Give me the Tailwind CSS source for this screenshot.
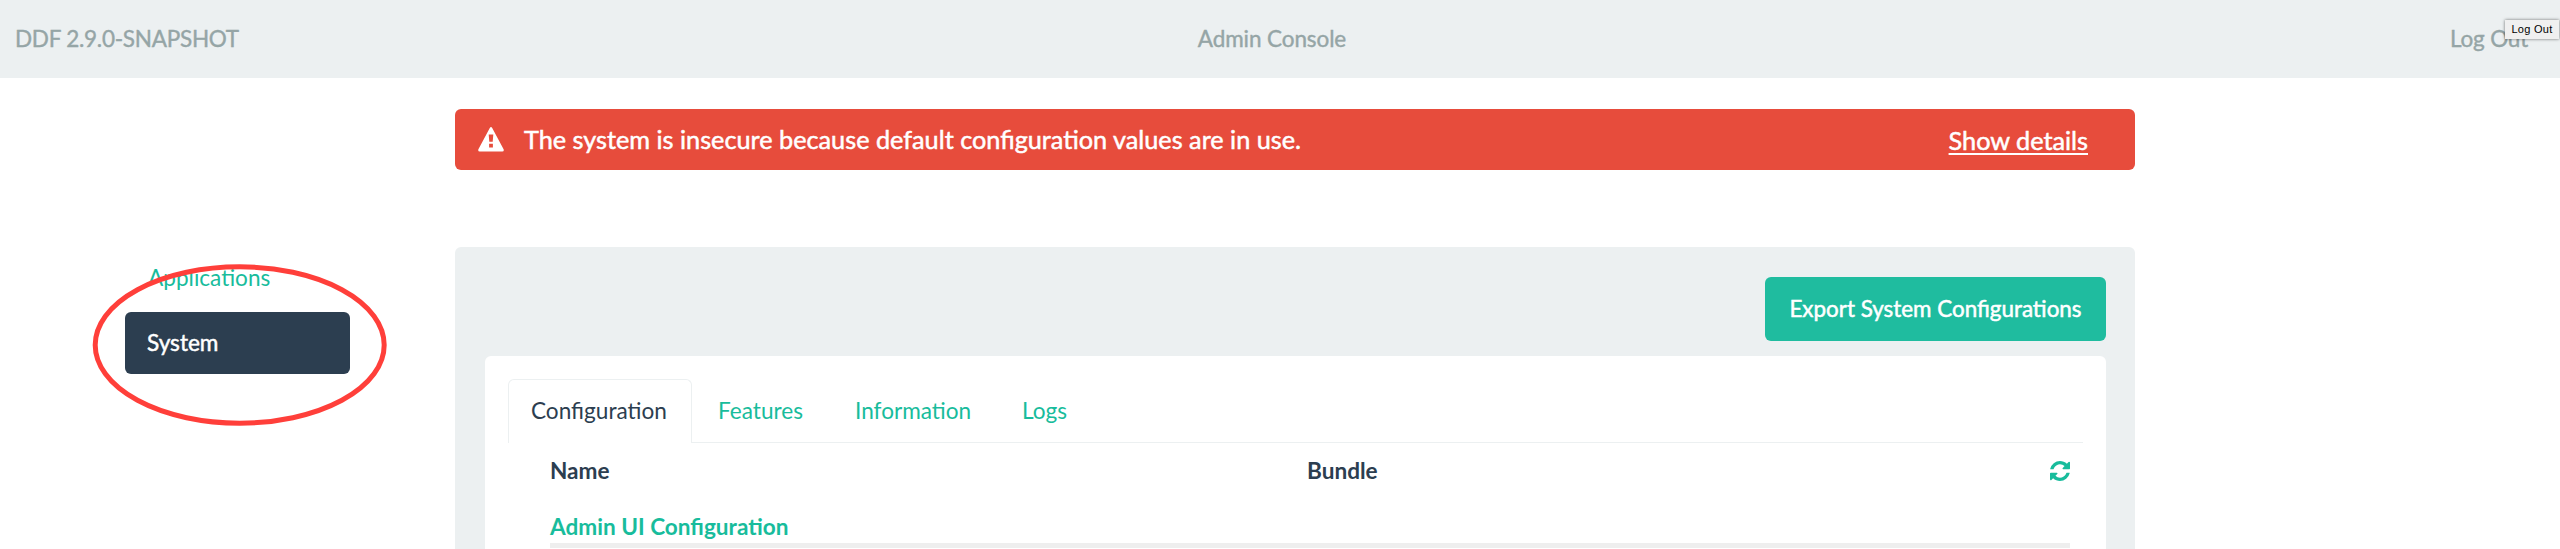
<!DOCTYPE html>
<html lang="en">
<head>
<meta charset="utf-8">
<title>Admin Console</title>
<script src="https://cdn.jsdelivr.net/npm/@tailwindcss/browser@4"></script>
</head>
<body class="relative h-[549px] overflow-hidden bg-white font-[Lato,sans-serif] text-[22.6px] leading-8 text-[#2c3e50]">
  <header class="grid h-[78px] grid-cols-3 items-center bg-[#ecf0f1] pl-[15px] pr-[32px] text-[22.5px] text-[#95a5a6] [-webkit-text-stroke:0.4px_#95a5a6]">
    <div><span class="tracking-[-0.25px]">DDF 2.9.0-SNAPSHOT</span></div>
    <div class="pl-px text-center"><span class="tracking-[-0.1px]">Admin Console</span></div>
    <div class="text-right"><span class="tracking-[-0.2px]">Log Out</span></div>
  </header>
  <div class="absolute right-[1px] top-[20px] flex h-[19px] w-[54px] items-center justify-center bg-[#f0f0f0] font-['Liberation_Sans',sans-serif] text-[11px] leading-none tracking-[0.3px] text-black shadow-[0_0_3px_rgba(0,0,0,0.55)]"><span>Log Out</span></div>

  <div class="flex">
    <nav class="w-[455px] shrink-0 pl-[125px] pt-[171px]">
      <a class="flex h-[58px] items-center pl-[23px] text-[#18bc9c]"><span>Applications</span></a>
      <a class="mt-[5px] flex h-[62px] w-[225px] items-center rounded-md bg-[#2c3e50] pl-[22px] text-white [-webkit-text-stroke:0.5px_white]"><span>System</span></a>
    </nav>
    <main class="w-[1680px] shrink-0 pt-[31px]">
      <div class="flex h-[61px] items-center rounded-md bg-[#e74c3c] pl-[23px] pr-[47px] text-[25.25px] text-white">
        <svg class="h-[25px] w-[26px] shrink-0" viewBox="0 0 26 25"><path fill="#fff" fill-rule="evenodd" d="M11.8.9Q13-.7 14.200.9L25.600 22.200Q26.300 24.300 24.300 24.500H1.700Q-.3 24.300.4 22.200ZM10.700 7.600 11.300 14.700H14.700L15.300 7.600ZM11.100 16.700V20.400H14.900V16.700Z"/></svg>
        <span class="ml-[20px] pb-[2px] [-webkit-text-stroke:0.5px_white]">The system is insecure because default configuration values are in use.</span>
        <a class="ml-auto underline decoration-2 underline-offset-[3px] [-webkit-text-stroke:0.5px_white]">Show details</a>
      </div>
      <section class="mt-[77px] h-[302px] rounded-t-md bg-[#ecf0f1] pl-[30px] pr-[29px] pt-[30px]">
        <div class="flex justify-end">
          <button class="flex h-[64px] w-[341px] items-center justify-center rounded-md bg-[#1fbc9f] text-[22.4px] text-white [-webkit-text-stroke:0.5px_white]"><span>Export System Configurations</span></button>
        </div>
        <div class="mt-[15px] h-[193px] rounded-t-md bg-white px-[23px] pt-[23px]">
          <div class="flex h-[64px] border-b border-[#ecf0f1] text-[#18bc9c]">
            <a class="flex h-[64px] w-[184px] items-center rounded-t-md border border-b-0 border-[#ecf0f1] bg-white pb-[2px] pl-[22px] text-[#2c3e50]"><span>Configuration</span></a>
            <a class="flex w-[137px] items-center pl-[26px]"><span>Features</span></a>
            <a class="flex w-[167px] items-center pl-[26px]"><span>Information</span></a>
            <a class="flex items-center pl-[26px]"><span>Logs</span></a>
          </div>
          <div class="pl-[42px] pr-[13px]">
            <div class="flex h-[56px] items-center font-bold">
              <span class="w-[757px]">Name</span>
              <span>Bundle</span>
              <svg class="ml-auto size-[20px]" viewBox="0 0 1536 1536"><path fill="#18bc9c" d="M1511 928q0 5-1 7-64 268-268 434.500t-478 166.500q-146 0-282.500-55t-243.500-157l-129 129q-19 19-45 19t-45-19-19-45v-448q0-26 19-45t45-19h448q26 0 45 19t19 45-19 45l-137 137q71 66 161 102t187 36q134 0 250-65t186-179q11-17 53-117 8-23 30-23h192q13 0 22.500 9.500t9.500 22.500zM1536 128v448q0 26-19 45t-45 19h-448q-26 0-45-19t-19-45 19-45l138-138q-148-137-349-137-134 0-250 65t-186 179q-11 17-53 117-8 23-30 23h-199q-13 0-22.500-9.500t-9.500-22.500v-7q65-268 270-434.500t480-166.500q146 0 284 55.500t245 156.500l130-129q19-19 45-19t45 19 19 45z"/></svg>
            </div>
            <div class="flex h-[49px] items-end border-b-[5px] border-[#eeeeee] font-bold text-[#18bc9c]"><span>Admin UI Configuration</span></div>
          </div>
        </div>
      </section>
    </main>
  </div>
  <svg class="pointer-events-none absolute left-[90px] top-[262px] h-[166px] w-[300px]" viewBox="0 0 300 166"><ellipse cx="149.700" cy="83" rx="144.500" ry="78.200" fill="none" stroke="#ff3f3a" stroke-width="5"/></svg>
</body>
</html>
